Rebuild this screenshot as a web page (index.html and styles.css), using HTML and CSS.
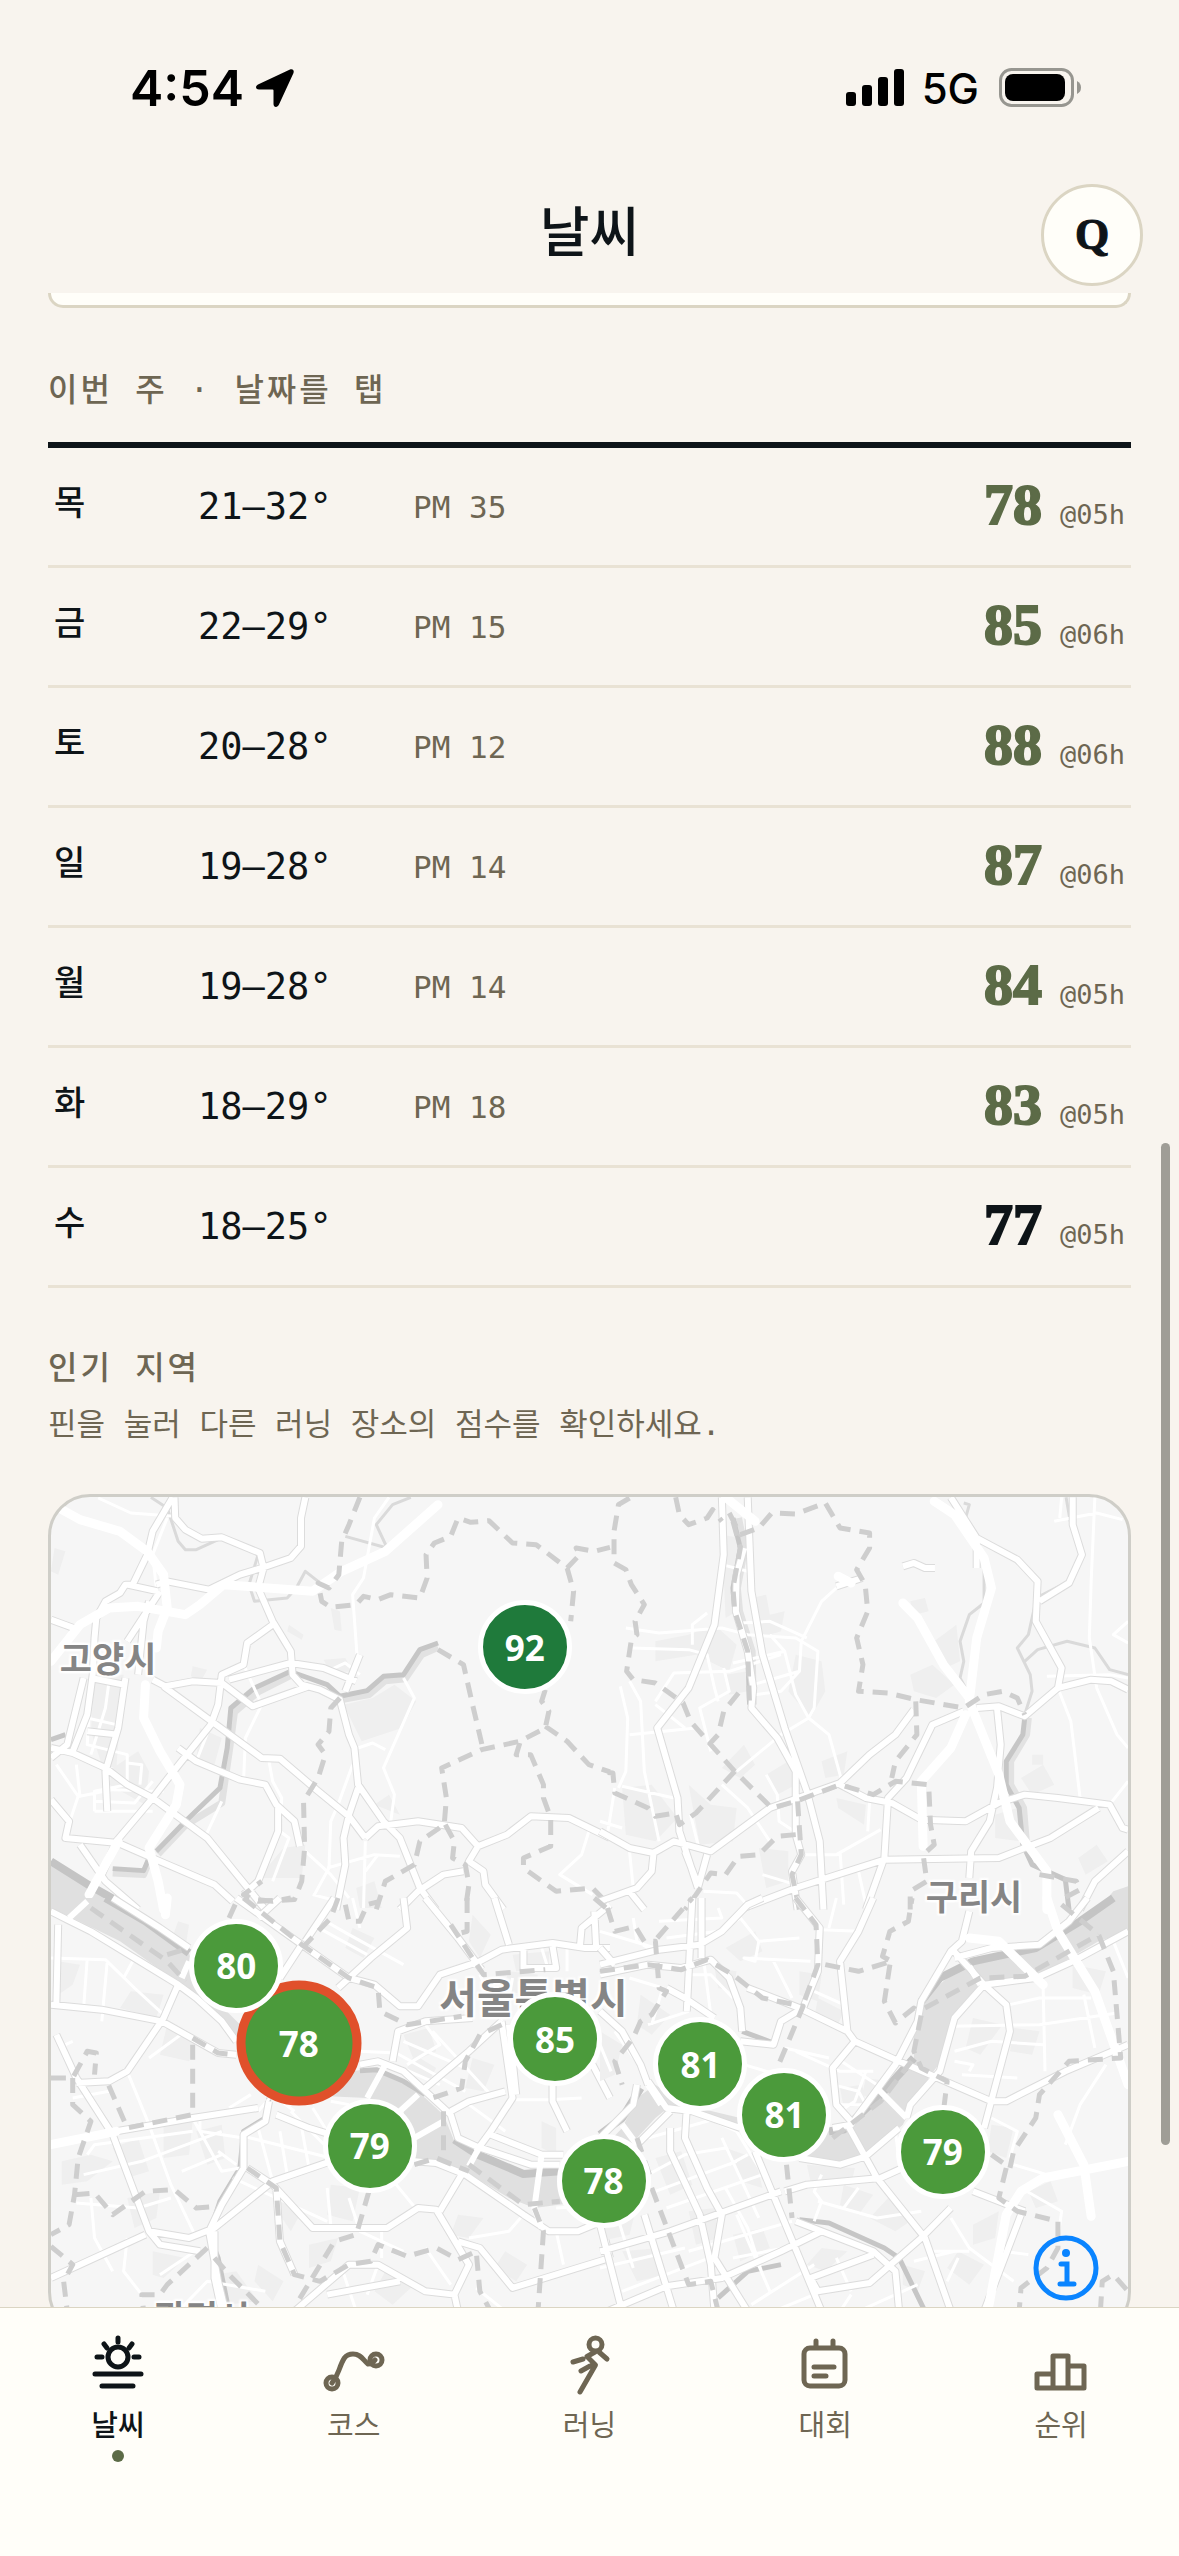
FILE: index.html
```html
<!DOCTYPE html>
<html lang="ko">
<head>
<meta charset="utf-8">
<meta name="viewport" content="width=device-width, initial-scale=1">
<title>날씨</title>
<link rel="stylesheet" href="styles.css">
</head>
<body>
<div class="app">
  <div class="status">
    <div class="status-left">
      <span class="clock">4:54</span>
      <svg class="locate" viewBox="0 0 40 40" aria-hidden="true"><path d="M35 1.500 3 16.500C0 18 .5 21.500 4 21.500H17.500Q18.500 21.500 18.500 22.500V36C18.500 39.500 22.500 40 24 36.500L38.500 5C39.500 2.500 37.500.5 35 1.500Z"/></svg>
    </div>
    <div class="status-right">
      <svg class="bars" viewBox="0 0 58 38" aria-hidden="true"><rect y="23" width="10" height="14" rx="3"/><rect x="16" y="16" width="10" height="21" rx="3"/><rect x="32" y="8" width="10" height="29" rx="3"/><rect x="48" width="10" height="37" rx="3"/></svg>
      <span class="network">5G</span>
      <svg class="battery" viewBox="0 0 83 40" aria-hidden="true"><rect class="shell" x="1.500" y="1.500" width="72" height="36" rx="11"/><rect x="6" y="6" width="60" height="27" rx="8"/><path class="nub" d="M78 13Q82 15 82 19.500T78 26Z"/></svg>
    </div>
  </div>

  <header class="header">
    <h1 class="title">날씨</h1>
    <button class="profile" type="button" aria-label="프로필">Q</button>
  </header>

  <main class="content">
    <div class="card-end"></div>

    <h2 class="eyebrow week-label">이번 주 · 날짜를 탭</h2>
    <table class="week">
      <colgroup><col class="col-day"><col class="col-temp"><col><col></colgroup>
      <tbody>
        <tr><th scope="row">목</th><td class="temp">21–32°</td><td class="pm">PM 35</td><td class="rate"><span class="score good">78</span><span class="hour">@05h</span></td></tr>
        <tr><th scope="row">금</th><td class="temp">22–29°</td><td class="pm">PM 15</td><td class="rate"><span class="score good">85</span><span class="hour">@06h</span></td></tr>
        <tr><th scope="row">토</th><td class="temp">20–28°</td><td class="pm">PM 12</td><td class="rate"><span class="score good">88</span><span class="hour">@06h</span></td></tr>
        <tr><th scope="row">일</th><td class="temp">19–28°</td><td class="pm">PM 14</td><td class="rate"><span class="score good">87</span><span class="hour">@06h</span></td></tr>
        <tr><th scope="row">월</th><td class="temp">19–28°</td><td class="pm">PM 14</td><td class="rate"><span class="score good">84</span><span class="hour">@05h</span></td></tr>
        <tr><th scope="row">화</th><td class="temp">18–29°</td><td class="pm">PM 18</td><td class="rate"><span class="score good">83</span><span class="hour">@05h</span></td></tr>
        <tr><th scope="row">수</th><td class="temp">18–25°</td><td class="pm"></td><td class="rate"><span class="score">77</span><span class="hour">@05h</span></td></tr>
      </tbody>
    </table>

    <h2 class="eyebrow">인기 지역</h2>
    <p class="hint">핀을 눌러 다른 러닝 장소의 점수를 확인하세요.</p>

    <div class="map">
      <svg class="map-art" viewBox="51 1499 1077 834" preserveAspectRatio="xMidYMid slice" aria-hidden="true">
        <defs>
          <path id="nw" d="M365 28 310 130 295 200 255 290 235 290 220 315 180 340 155 390 150 450 145 560 130 680 90 790M370 28 372 90 400 125 445 152 500 148 605 195 615 240 600 300 640 400 690 490 695 560 720 590 770 605 825 635 850 740 865 780 875 890 945 1000 990 1050 1045 1200 1090 1265M730 28 718 90 718 175 690 210 610 240 550 260 465 305 350 280 320 290M240 290 325 310M330 310 240 460M300 340 285 400 270 560M640 410 570 465 560 530 500 560 490 650 470 710 360 860 310 930 210 1060 170 1160M500 585 585 655 740 595M520 575 690 525 780 540 870 580M880 500 840 610M30 395 105 425M120 570 75 770 30 810M30 780 90 795 180 840 240 890 310 930 460 1050 620 1265M340 595 610 810 660 812 760 905 850 985 895 1050M310 575 345 595 420 580 500 585M380 780 430 820 550 875 620 890 650 950 700 1000 715 1075M655 960 655 1030 600 1180 560 1220M235 570 215 720 180 850 185 970M30 935 80 1000 70 1050 215 1065 330 1120 480 1190 530 1240M110 1070 180 1180 270 1265M875 900 850 980 835 1050 840 1130 815 1265M895 1050 930 1015 1040 1000 1160 1020 1205 1075 1180 1120 1220 1150 1225 1190 1275 1265M1205 1075 1285 1040 1350 985 1455 990 1568 1050M990 1265 1040 1210 1110 1160 1165 1150M130 730 215 740M140 570 230 590"/>
          <path id="ne" d="M330 28 335 200 310 410 240 600 155 720 210 930 215 1030 265 1200M400 28 410 310 440 500 500 720 560 910 595 1060 605 1265M390 180 370 260 368 370 400 490 415 600 410 660 480 750 530 850 530 940 530 1040 545 1100 520 1150 535 1265M950 28 1020 150 1130 215 1185 280 1180 400 1250 540 1240 600 1150 685 1080 655 1020 660M1280 28 1280 110 1305 200 1270 285 1190 340M1240 600 1330 575 1385 580 1430 605M850 665 800 740 730 800 650 885 460 960 300 1090 200 1060 145 1095M985 670 900 710 830 870 780 930 770 1110 720 1265M650 890 720 930 790 945 870 995 990 1000 1080 945 1150 920 1240 930 1380 950 1415 1020 1430 1025M1075 660 1085 770 1075 900 1055 1000 1005 1090 1000 1170M390 1260 530 1200 770 1115 1080 1110 1220 1050 1350 960M0 1030 80 1080 145 1095 140 1150 100 1200 0 1240M290 1100 265 1200M230 1090 265 1190M80 1210 120 1265M1430 1090 1340 1180 1300 1265M820 235 850 225 880 240 907 240M640 295 710 270M1020 160 1020 240"/>
          <path id="sw" d="M50 80 45 320M30 40 75 65 140 100 260 180 380 260 430 300 500 370 540 430M200 0 330 90 410 150M380 260 340 360 240 520 190 550 100 555M30 320 170 335 335 370 490 465 540 470M45 410 100 540 200 710 300 1000 330 1040 440 1060M210 700 420 660 600 630M30 1140 130 1090 290 1010M300 1000 410 1020 480 990 640 850 800 790M630 610 620 670 560 710 560 810 500 920 465 1000 490 1150 510 1240M570 810 640 860 750 990 955 990 1040 930 1090 935 1180 1100 1140 1190M1100 940 1160 830M1200 760 1240 700 1300 600 1270 370M650 650 740 690 800 710M1030 790 1090 795 1170 830 1330 950 1400 1000 1480 1000 1568 960M1000 0 1010 90 910 180 850 240 820 270M540 0 720 140 850 240 920 260 990 325 1040 325 1100 230 1210 190 1270 155 1410 135 1500 150 1568 150M1060 0 1150 120 1215 215M1250 0 1290 140M1568 20 1490 90 1485 150M1525 40 1530 150M720 140 660 240M880 500 930 490 1000 520 1060 580 1130 650 1150 720 1200 745 1350 800 1430 800M1060 570 1180 460 1270 370M1130 640 1180 610 1280 580M970 490 985 400 1060 370 1190 360M1290 380 1310 590M1410 560 1410 610 1450 700M1520 500 1568 600M1240 710 1380 770 1440 770M1150 1030 1210 1050 1300 1170 1568 1080M700 1240 850 1100 930 1100 1060 1180 1140 1190 1150 1240M790 1190 990 1150M1330 155 1330 210 1420 210 1410 145M650 870 660 1030 700 1130M480 1000 480 1140 500 1240M1545 980 1568 1080M810 0 730 130M600 60 660 0"/>
          <path id="se" d="M0 200 160 155 270 140 330 100 400 20 440 0M250 0 235 340M275 0 275 180M0 230 130 200 220 210 300 185 350 240 380 330 385 400M530 0 595 90 590 220 550 330 490 370 470 440 380 430M740 0 700 100 650 190 670 400 690 430 810 490 1060 610 1100 610 1260 520 1430 440M400 270 540 330 670 400M690 430 630 510 640 620 680 670M1000 40 980 130 950 160 870 310 860 370 800 500 680 680 630 690M950 150 1000 210 1040 260 1100 320 1110 400 1040 690M1320 0 1270 70 1190 140 1060 150 960 180M1430 100 1280 190 1180 240 1040 260 960 360 920 520 840 620 830 660M670 680 750 840 880 1020 950 1240M130 550 180 630 250 640 380 690M100 740 190 640M235 630 230 720 290 870 330 950 310 1080 400 1240M190 690 190 760 270 950 300 1100 310 1240M420 760 600 1240M540 780 650 800 720 775 810 690M500 880 560 860 760 840 820 810M0 1060 190 1000 490 880M0 980 60 1240M120 950 200 1240M20 1240 180 1165 330 1140 490 1060 600 1000M530 970 600 1000 740 1060 800 1120 810 1240M570 1140 740 1070M570 1140 590 1180 730 1155 870 1020 950 930M1010 880 1150 940M1140 950 1040 1240M0 340 60 400 110 500 130 560M180 270 230 300 310 360M0 150 40 200M100 560 90 620 0 720"/>
        </defs>

        <g class="tile-nw">
          <path class="block" d="M150 560h80l-20 280-40-10-30-100zM200 840l70-50 30 60-10 100-100-60zM835 650l80-20 60-40 60 50-40 80-110 40zM600 1170l70-90 60-10-10 100zM870 1200l50-20 20 80h-60zM440 720l60 30-20 80-50-20zM920 950l40-30 30 60zM40 180l30 10-20 70-20-10zM800 360l25 10 5 60-20-5zM685 410l40 30-5 15-40-25zM420 535l40 10-15 30-30-10zM780 515l60-5 20 40-60 5z"/>
          <path class="water" d="M30 1120 140 1200 250 1265H30Z"/>
          <path class="bank" d="M30 1120 140 1195 250 1262"/>
          <path class="stream" d="M305 28 350 60 380 160 400 185 430 185 490 155M600 200 575 290 590 340 680 330 705 300 730 250 765 280 790 300M840 145 955 180 925 110 970 50 1020 28"/>
          <path class="canal-bed" d="M690 562 600 612 535 672 522 780 500 945 400 1012 325 1098M1095 478 1050 500 1005 572 950 578 905 620 830 635M300 1120 285 1160 200 1155"/>
          <path class="canal" d="M1095 465 1045 485 1000 560 945 565 900 608 825 625 790 590 700 555M690 550 590 600 525 660 515 780 495 900 400 1000 320 1090M300 1110 285 1148 200 1142M30 755 70 740"/>
          <path class="minor" d="M160 30 250 75 370 85M960 28 920 90 890 270 860 320 872 500 870 545M350 90 310 200 320 300M560 530 610 650 565 750 560 880M500 940 455 1045M1000 570 1030 630 945 840 975 920 965 1000M875 780 915 765 950 785M860 830 820 950 800 1000 795 1140 755 1220M895 1060 890 1260M630 820 640 880 665 930 660 1030 685 1050 640 1180M990 1105 920 1100 790 1140M730 1090 800 1160 850 1230M930 1100 895 1150M45 830 105 925 70 1040M100 830 110 925 200 905 340 910M150 970 310 970M150 940 260 945 310 880M140 570 130 770 240 800 240 890 150 910 150 970M190 580 180 660 140 800M240 825 280 830 275 890M130 690 210 710M470 710 430 820M1510 1030 1490 1100 1430 1160 1520 1220M750 1220 820 1240M800 545 840 525 880 560"/>
          <use href="#nw" class="casing"/><use href="#nw" class="major"/>
          <path class="motorway" d="M60 65 110 95 220 130 295 190 340 260 350 360 325 430 320 480M30 520 110 410 190 360 270 355 400 380 440 350 505 290 750 310 830 250 950 190 1095 50M290 590 285 690 330 790 385 890 375 950 300 1080 325 1180 340 1265M215 1060 135 1220"/>
          <path class="border-line" d="M880 28 850 110 830 160 822 260 795 300 765 285 775 340 800 358 870 350 890 325 930 335 965 320 1045 330 1065 270 1062 200 1085 165 1130 145 1150 90 1185 103 1235 98 1300 165 1365 170 1450 240 1485 200 1475 180 1525 190 1568 178M1450 240 1468 310 1460 400M1390 605 1380 640 1400 670 1390 720 1320 760 1215 785 1105 840 1118 930 1112 1010 1045 1060 1030 1130 950 1180 925 1265M1095 485 1165 530 1190 650 1218 780M1390 715 1450 760 1510 830 1568 852M1320 765 1310 800 1350 800 1385 890 1385 930 1405 990 1405 1075 1330 1110 1330 1140 1420 1210 1520 1200 1568 1255M825 630 800 660 795 730 765 770 785 800 765 870 725 940 728 1080 720 1180 700 1235 600 1240 560 1220 610 1180M1115 1010 1140 1060 1135 1110 1170 1130 1180 1190 1170 1265"/>
        </g>

        <g class="tile-ne">
          <path class="block" d="M330 140l50 10-10 220-30 20zM410 330l40-10 10 60 40-10-10 60-60 20zM150 460l90-20 70-30 60 60-20 80-90-50-110 20zM340 560l60-10v60l-50 10zM530 500l70 20 10 90-40 80-60-80zM840 560l60-30 60 60-50 40-60-20zM905 460l60-50 10 110-40 20zM840 340l40-10 10 40-40 10zM60 900l80-10 70 100-60 70-80-20zM240 890l60 60 70 10-10 100-90 10zM330 840l60-70 30 60-40 40zM600 820l70-30-10 70-50 10zM1070 980l60-20 10 100-70-10zM1140 870l60-40 30 60-60 30zM1295 1110l50-40 30 50-60 40zM450 860l60-40 20 70-50 30zM640 930l80 20-5 60-70-50zM430 1080l80 10v90l-60 20zM1170 800h30v30h-30z"/>
          <path class="water" d="M1430 1195 1390 1210 1350 1265H1430Z"/>
          <path class="stream" d="M985 45 1000 50 990 90M1040 210 1040 345 1000 380 975 460 985 520 975 570 1000 620M1262 28 1275 110M1180 340 1160 440 1130 480 1165 560 1170 610 1150 680M1150 520 1185 485 1265 460 1340 480 1380 545 1430 560M1190 325 1260 285"/>
          <path class="canal-bed" d="M375 90 392 180 372 300 378 370 412 490 415 650M1160 690 1155 740 1112 820 1112 890 1147 960 1155 1070"/>
          <path class="canal" d="M1150 690 1145 740 1100 820 1100 890 1135 960 1145 1070 1170 1130 1260 1175 1270 1265M360 90 380 180 360 300 365 370 400 490 405 650"/>
          <path class="minor" d="M70 420 160 435 330 420 400 440 530 450 590 490 580 660 565 690 530 620 500 490 460 440M85 480 240 485 290 500 310 600 320 640M250 470 250 410 290 375M330 230 400 250M380 405 460 400 560 450M360 525 500 490M150 640 200 555 350 550 490 500M420 620 490 610 540 550 545 460 600 340 640 300M335 540 350 610 270 660 300 790M415 590 540 550M150 650 230 720M80 740 260 720M80 580 110 640 120 850 160 1060M55 595 75 690 70 850 50 900M60 895 200 930M330 890 400 960 460 1060M370 850 490 740 565 690 620 740 655 880M40 900 20 1040M245 980 270 1090M1340 28 1330 280 1325 450 1345 600 1400 740 1430 780M1240 600 1275 700 1300 930M1250 28 1245 90M1230 100 1345 75 1415 95M1430 400 1390 440 1430 465M1430 880 1380 950M1210 565 1380 560 1430 570M555 1100 640 1100 760 1025M650 1090 660 1250M700 1150 720 1250M730 940 725 1030M450 860 480 920 485 1000 540 1040M0 1000 60 1020M80 1090 90 1200M280 1210 370 1215 410 1265M440 1160 530 1190"/>
          <use href="#ne" class="casing"/><use href="#ne" class="major"/>
          <path class="motorway" d="M340 28 420 100M905 40 960 80 1040 210 1060 300 1020 450 1000 640 1080 860 1110 1000 1210 1150 1210 1265M820 345 860 390 930 530 1000 630M990 680 950 780 870 880 875 1075M645 265 680 285"/>
          <path class="border-line" d="M80 30 50 50 38 130 38 225 70 245 85 290 120 350 95 400 100 440 85 455 72 550 90 575 150 585 225 645 245 700 300 770 365 850 465 960 530 940 650 890 740 920 800 880 890 890 895 1010 905 1070 875 1100 885 1180 840 1210 840 1265M205 28 215 80 240 110 290 90 305 65 330 100M350 75 380 140 430 120 465 75 530 78 610 45 650 120 730 135 730 180 695 245 718 290 725 370 695 450 712 530 700 610 780 615 855 635 985 660 1040 620 1090 610 1130 630 1150 680M855 640 858 740 800 820 790 870M375 615 335 670 320 740 295 770M365 850 260 975 215 1010 205 975 150 985 130 960 40 915 35 855 0 852M530 1040 480 1045 430 1100 375 1105 340 1160 300 1155 260 1220 230 1265M535 940 545 1100 520 1160 540 1265M1190 1160 1290 1180 1300 1205 1240 1240M360 100 380 180 360 300 365 370 400 490 405 650"/>
        </g>

        <g class="tile-sw">
          <path class="block" d="M50 190l60 10-20 60-40 30zM250 280l90 10-20 70-100-30zM350 380l80 50-20 60-80-20zM60 790l80-20 60 20-70 60-70 10zM200 750l70-30 30 100-60 20zM340 660l80 10-10 100-70 10zM430 700l70-20 10 100-50 20zM240 900l90-20-10 80-60 30zM310 1060l90 20-60 60-30-10zM380 70l30 10-10 70-40-20zM860 90l60 30-30 60-50-30zM1000 410l70-20 20 70-60 30zM1030 470l60 40-20 40-60-40zM1190 50l50 60-30 70-30-50zM1300 170l100-10v50l-90 10zM1150 950l70 10-40 60-50-10zM1380 670l40 20v80l-40-20zM740 1040l80-20-20 70-60 20zM660 880l60 60-30 60-30-50zM600 1100l70 50-30 60-50-60zM950 1120l80 40-60 60-50-40zM1190 480l60 20-30 80-50-10zM1290 220l80 10-20 60-80-10zM1280 1060l60 40-30 50-60-40zM800 860l80 10-20 100-70-20zM480 1130l60-10 60 90-90 10z"/>
          <path class="water" d="M30 0H180L410 165 430 250 560 390 700 440 860 520 920 510 1000 550 1060 600 1110 650 1140 730 1200 760 1300 810 1380 830 1568 790V900L1360 930 1290 900 1200 840 1110 790 1030 790 1000 640 900 600 700 590 540 420 430 290 350 230 220 130 90 60 30 30Z"/>
          <path class="bank" d="M180 0 290 70 410 165M1140 725 1200 768 1330 828 1430 820"/>
          <path class="canal" d="M630 600 620 660 560 700 550 810 495 910 465 1010 490 1080 520 1240M880 518 925 515 1000 550 1060 590"/>
          <path class="minor" d="M30 180 180 185 260 270 340 350M130 180 120 330M185 190 170 370M260 180 230 240M70 440 90 430M90 600 190 580M240 520 300 680 360 860 430 1020M130 770 150 740 420 700M120 830 280 790 500 700M420 660 500 820 550 810M100 915 270 930 360 900M140 900 150 1020 200 1120M440 660 440 700 560 720M490 760 540 800M390 820 500 770M600 690 640 850M660 700 680 830M720 690 740 810M560 715 800 780M600 640 640 590 700 640M520 630 580 590M690 640 800 760M750 630 790 700M800 610 850 620M530 840 650 900 790 970M790 870 800 980M450 1000 550 920 640 850M240 1020 230 1120 280 1190M330 1130 440 1050M750 80 900 170M770 60 850 110 1000 200M740 160 820 220M860 0 880 90M400 400 300 480M1000 430 1170 510M880 460 980 465 1170 580M1010 500 1100 440 1060 380M1080 400 1240 590M930 480 1100 560M1180 620 1280 700M1300 605 1400 605 1490 600M1450 150 1450 220M1380 150 1400 220M1240 240 1260 300M1300 240 1290 300M1210 230 1270 370M850 900 880 1000 1000 1060M940 1000 940 1080M1040 940 980 860 920 850M830 1110 870 1240M930 1100 900 1190M1060 1050 1130 1160M1180 1020 1290 1000 1330 950M1200 1170 1280 1240M1420 1000 1440 1100M1420 930 1568 920M380 1240 460 1150 620 1180"/>
          <use href="#sw" class="casing"/><use href="#sw" class="major"/>
          <path class="bridge" d="M130 10 80 60M410 190 390 240M900 600 950 500M990 640 1040 590M1030 720 1110 670M1180 805 1205 755M1380 770 1360 930 1380 990"/>
          <path class="motorway" d="M30 740 210 700M350 0 345 50"/>
          <path class="border-line" d="M420 420 490 465 530 470M420 440 420 650 240 690 180 540M30 540 90 540 130 460 155 465 150 530M90 540 90 620 140 670 105 780 95 890 80 980 30 1010M95 890 150 885 200 950 290 880 370 875 430 930 490 925M30 1045 90 1100 65 1150 75 1240M520 60 545 0M560 0 720 140 850 240 930 270 935 340 1010 380 1160 355M820 0 800 60 730 140M840 20 850 70 880 70 900 20 935 10M600 5 640 10 690 0M1175 0 1175 100 1140 110M1130 80 1220 230 1390 215M1270 380 1210 410 1170 490 1160 570 1080 600M1110 640 1110 770M570 810 650 870 660 1030 700 1130 770 1150 850 1100 910 1090 930 1040 1010 1075 1090 1050 1150 1085 1200 1060 1210 1180 1240 1240M905 880 870 1010 810 1030 710 1210M1360 930 1385 1000 1370 1240M460 1050 350 1160 330 1190 280 1190 285 1240M480 1080 520 1130 620 1240M140 30 350 190 400 250M350 170 410 150M1180 800 1330 920 1430 910M1030 800 1090 780 1180 820M1525 0 1568 40M1545 460 1568 500"/>
        </g>

        <g class="tile-se">
          <path class="block" d="M340 150l80-50 20 60-60 30zM310 210l60 10-10 60-40-10zM110 290l80 60-50 60-40-30zM540 220l60 10-10 80-50-20zM590 300l70 40-20 50-60-30zM1100 170l60 30 10 50-60-20zM1280 200l90 20-20 70-70-20zM1120 390l70 10-20 70-60-10zM1010 360l80 20-60 90-40-20zM1060 680l60 10-20 90-50-20zM660 860l80 30-40 60-50-30zM780 900l60 70-40 30-70-40zM600 1050l70 10-60 60-50-20zM340 750l80 30 20 90-60-20zM150 780l70-20 30 100-60 30zM20 900l80 20-20 90-80 20zM240 940l70-10 10 90-60 20zM60 1060l100-10 20 80-80 20zM360 1010l80-20 20 60-80 40zM1010 980l70-40-10 80-60 20zM970 1060l70 40-40 60-60-50zM1160 880l60-30 20 60-60 20zM650 570l60-10 10 60-60 10zM720 540l60 10-30 60-40-20zM0 400l60 40-20 90-40 20zM560 800l130 10-10 50-110-10zM820 1100l60 20-20 60-40-20z"/>
          <path class="water" d="M0 760 60 690 100 600 150 560 230 620 380 660 500 720 620 700 700 660 800 540 850 480 850 400 880 300 960 220 1010 190 1150 150 1300 80 1390 0H1430V100L1350 130 1180 240 1040 260 980 330 930 480 870 570 820 680 730 770 650 795 560 780 390 700 250 645 190 625 150 660 100 720 0 850Z"/>
          <path class="bank" d="M620 700 660 695 760 590 850 480M870 310 920 240 1010 190 1180 150 1300 70 1390 0M0 710 60 660 110 570"/>
          <path class="canal" d="M540 965 620 975 770 1050 810 1080 880 1240M385 400 470 435M320 1200 400 1120 490 1100"/>
          <path class="minor" d="M0 100 60 120 150 150M90 60 100 130 130 150M160 70 330 60 320 30M180 120 320 100 380 60M380 60 430 130 420 190 390 180 570 190M430 130 540 120M600 95 700 100M640 0 620 90M470 190 520 300M580 280 660 320M240 230 300 230 360 300M80 240 170 270 140 380M130 380 240 340M280 180 300 350M530 460 650 520 740 520M500 450 620 480M390 500 510 540M630 560 700 580 720 620 650 620M640 480 750 560M720 520 690 610 650 640M950 385 1190 380 1400 345M960 460 1060 430 1200 440M960 490 1010 500 1000 520M980 530 1130 540M1200 270 1205 520M1110 320 1190 300 1330 300M1310 290 1340 450M1390 130 1430 240M1370 500 1300 620 1260 740M1060 660 1130 700 1110 780M1120 800 1210 830M1140 870 1250 940 1240 1020M800 700 810 790M600 830 580 880 600 910 580 970M590 910 750 960 870 940M700 870 660 930M950 960 1000 1050 1120 1150M900 1060 1000 1060M850 1090 960 1060M970 1080 940 1150M130 830 230 770 340 750M150 880 370 790M130 720 320 660M290 660 370 700 480 900M330 720 430 960M180 930 440 830M340 870 400 990 440 1130M240 1060 520 970M40 930 90 1110M60 1180 320 1070M0 1110 230 1050M370 950 460 1180M410 1220 580 1100M470 1240 580 1190M640 1080 680 1180M360 1080 500 1050M700 1240 860 1160M650 1240 680 1190M1090 1060 1160 1070M40 400 130 540M0 440 30 520M400 770 350 800"/>
          <use href="#se" class="casing"/><use href="#se" class="major"/>
          <path class="bridge" d="M750 570 830 660M1000 205 1030 260M60 680 100 740M130 560 165 620"/>
          <path class="motorway" d="M1210 0 1240 100 1340 280 1430 560M1000 120 1080 130 1200 260M1240 650 1310 800 1330 955M1430 790 1200 840 1140 880 1100 950 1050 1240"/>
          <path class="border-line" d="M0 220 130 200 220 215 290 185 360 230 440 300 550 325 480 510M20 30 40 100 95 85 120 130 150 130 160 270 180 280 140 350 110 370 90 420 40 490 60 560M155 120 250 0M530 0 585 80 590 200 550 320M610 200 700 220 790 190 765 175 785 100 835 70 845 0M785 200 770 310 800 375 850 330 870 350 850 460 870 510 940 550 930 640M1250 20 1350 110 1390 220 1410 480 1270 490 1190 590 1180 660 1120 760 1110 810 1060 770M1100 810 1080 900 1130 940 1240 970 1240 1050 1210 1110 1140 1170 1135 1240M505 800 520 960M140 870 240 1160 300 1150 320 1240M1355 1240 1360 1150 1390 1130 1430 1180M630 720 760 610 850 480M880 330 1030 240 1150 235 1350 110M100 720 140 850"/>
        </g>
      </svg>

      <span class="place" style="left:5.3%;top:19.2%">고양시</span>
      <span class="place" style="left:85.7%;top:47.7%">구리시</span>
      <span class="place city" style="left:44.8%;top:59.7%">서울특별시</span>
      <span class="place" style="left:14%;top:98.2%">광명시</span>

      <button class="pin best" type="button" style="left:44%;top:18%">92</button>
      <button class="pin selected" type="button" style="left:23%;top:65.5%">78</button>
      <button class="pin" type="button" style="left:17.2%;top:56.2%">80</button>
      <button class="pin" type="button" style="left:29.6%;top:77.8%">79</button>
      <button class="pin" type="button" style="left:46.8%;top:65%">85</button>
      <button class="pin" type="button" style="left:51.3%;top:82%">78</button>
      <button class="pin" type="button" style="left:60.3%;top:68%">81</button>
      <button class="pin" type="button" style="left:68.1%;top:74.1%">81</button>
      <button class="pin" type="button" style="left:82.8%;top:78.5%">79</button>

      <button class="info" type="button" aria-label="지도 정보">
        <svg viewBox="0 0 66 66" aria-hidden="true"><circle class="ring" cx="33" cy="33" r="30"/><circle cx="33" cy="18" r="4"/><path class="stem" d="M28 29H34V48M27 49H41"/></svg>
      </button>
    </div>
  </main>

  <nav class="tabs">
    <a class="tab active" href="#weather" aria-current="page">
      <svg viewBox="0 0 72 72" aria-hidden="true"><circle cx="36" cy="29" r="10"/><path d="M36 10v4M22 16l3 4M50 16l-3 4M15 29h5M52 29h5M13 46h46M20 58h31"/></svg>
      <span>날씨</span><i class="dot"></i>
    </a>
    <a class="tab" href="#course">
      <svg viewBox="0 0 72 72" aria-hidden="true"><circle cx="14" cy="55" r="6"/><circle cx="58" cy="32" r="6"/><path d="M14 55Q19 48 21 42C25 31 27 26 35 26C43 26 45 32 50 36Q54 36 57 32"/></svg>
      <span>코스</span>
    </a>
    <a class="tab" href="#running">
      <svg viewBox="0 0 72 72" aria-hidden="true"><circle cx="42.500" cy="16.500" r="6.500"/><path d="M42 24 34 28.500 42.500 37 27 64M46 24l8 7M20 34l10-3M28 43l9-5"/></svg>
      <span>러닝</span>
    </a>
    <a class="tab" href="#race">
      <svg viewBox="0 0 72 72" aria-hidden="true"><rect x="15" y="20" width="41" height="38" rx="6"/><path d="M27 13v6M44 13v6M25 39h20M25 48h12"/></svg>
      <span>대회</span>
    </a>
    <a class="tab" href="#ranking">
      <svg viewBox="0 0 72 72" aria-hidden="true"><path d="M12 46H28V60H12ZM28 28H43V60H28ZM43 38H59V60H43Z"/></svg>
      <span>순위</span>
    </a>
  </nav>
  <div class="scroll-thumb"></div>
</div>
</body>
</html>
```

FILE: styles.css
```css
:root {
  --paper: #f8f4ee;
  --surface: #fffef9;
  --ink: #0e1418;
  --muted: #6e6653;
  --line: #e9e2d4;
  --edge: #dbd5c3;
  --moss: #5c6b47;
  --sans: "Noto Sans CJK KR", "Noto Sans", sans-serif;
  --mono: "DejaVu Sans Mono", "Noto Sans CJK KR", monospace;
  --serif: "Liberation Serif", serif;
}

* { box-sizing: border-box; }

body {
  margin: 0;
  background: var(--paper);
  color: var(--ink);
  font-family: var(--sans);
}

button { padding: 0; font: inherit; }

.app {
  position: relative;
  display: flex;
  flex-direction: column;
  height: 100vh;
  overflow: hidden;
}

/* Status bar */
.status {
  display: flex;
  justify-content: space-between;
  align-items: center;
  height: 176px;
  padding: 0 97px 0 130px;
  font-family: Inter, sans-serif;
  color: #000;
}
.status-left, .status-right { display: flex; align-items: center; }
.status-left { gap: 11px; }
.clock { font-size: 50px; font-weight: 600; }
.network { margin: 0 20px 0 18px; font-size: 42px; font-weight: 500; }
.locate { width: 40px; height: 40px; }
.bars { width: 58px; height: 38px; }
.battery { width: 83px; height: 40px; }
.battery .shell { fill: none; stroke: #979690; stroke-width: 3; }
.battery .nub { fill: #979690; }

/* Header */
.header {
  display: grid;
  grid-template-columns: 1fr auto 1fr;
  align-items: center;
  height: 117px;
  padding: 0 36px;
}
.title {
  grid-column: 2;
  margin: 0;
  padding-bottom: 12px;
  font-size: 54px;
  font-weight: 500;
  line-height: 72px;
}
.profile {
  justify-self: end;
  width: 102px;
  height: 102px;
  border: 3px solid var(--edge);
  border-radius: 50%;
  background: var(--surface);
  color: var(--ink);
  font: 700 44px var(--serif);
  -webkit-text-stroke: 1px currentColor;
}

/* Scrolling content */
.content {
  flex: 1;
  min-height: 0;
  overflow: hidden;
  padding: 0 48px;
}
.card-end {
  height: 15px;
  border: 3px solid var(--edge);
  border-top: 0;
  border-radius: 0 0 20px 20px;
  background: var(--surface);
}
.eyebrow {
  margin: 0;
  color: var(--muted);
  font: 500 32px/48px var(--mono);
  letter-spacing: 3px;
}
.week-label { padding: 58px 0 28px; }

.week {
  width: 100%;
  table-layout: fixed;
  border-collapse: separate;
  border-spacing: 0;
  border-top: 6px solid var(--ink);
  margin-bottom: 56px;
}
.col-day { width: 150px; }
.col-temp { width: 215px; }
.week th, .week td {
  height: 120px;
  padding: 0 6px 0 0;
  border-bottom: 3px solid var(--line);
  text-align: left;
  vertical-align: middle;
  white-space: nowrap;
}
.week th { padding: 0 6px 12px; font-size: 34px; font-weight: 500; }
.week .temp { font: 37px var(--mono); }
.week .pm { font: 31px var(--mono); color: var(--muted); }
.week .rate { padding-bottom: 4px; text-align: right; }
.score {
  font: 700 58px var(--serif);
  -webkit-text-stroke: 2px currentColor;
}
.score.good { color: var(--moss); }
.hour { margin-left: 18px; font: 27px var(--mono); color: var(--muted); }

.hint {
  margin: 8px 0 46px;
  color: var(--muted);
  font: 31px/48px var(--mono);
}

/* Map */
.map {
  position: relative;
  height: 840px;
  border: 3px solid #cfcec8;
  border-radius: 42px;
  background: #f6f6f6;
  overflow: hidden;
}
.map-art { display: block; width: 100%; height: 100%; }
.map-art path, .map-art use { fill: none; vector-effect: non-scaling-stroke; stroke-linejoin: round; }
.tile-nw { transform: translate(40px, 1490px) scale(.3635, .3333); }
.tile-ne { transform: translate(600px, 1490px) scale(.3693, .3333); }
.tile-sw { transform: translate(40px, 1900px) scale(.3635, .3333); }
.tile-se { transform: translate(600px, 1900px) scale(.3693, .3333); }
.map-art .block { fill: #efefef; }
.map-art .water { fill: #e0e0e0; }
.bank { stroke: #c4c4c4; stroke-width: 8px; }
.stream { stroke: #dadada; stroke-width: 3px; }
.canal-bed { stroke: #e2e2e2; stroke-width: 7px; }
.canal { stroke: #c6c6c6; stroke-width: 5px; }
.minor { stroke: #fff; stroke-width: 3px; }
.casing { stroke: #dcdcdc; stroke-width: 8px; }
.major { stroke: #fff; stroke-width: 6px; }
.bridge { stroke: #fff; stroke-width: 6px; }
.motorway { stroke: #fff; stroke-width: 9px; stroke-linecap: round; }
.border-line { stroke: #cecece; stroke-width: 5px; stroke-dasharray: 15 9; }

.place {
  position: absolute;
  transform: translate(-50%, -50%);
  color: #858585;
  font-size: 35px;
  font-weight: 700;
  line-height: 40px;
  white-space: nowrap;
  text-shadow: 0 0 3px #fff, 2px 2px 2px #fff, -2px -2px 2px #fff, 2px -2px 2px #fff, -2px 2px 2px #fff;
}
.place.city { font-size: 41px; }

.pin {
  position: absolute;
  width: 94px;
  height: 94px;
  transform: translate(-50%, -50%);
  border: 5px solid #fff;
  border-radius: 50%;
  background: #4b9a3b;
  color: #fff;
  font: 700 35px "Noto Sans", sans-serif;
}
.pin.best { background: #1f7a3b; }
.pin.selected {
  width: 125px;
  height: 125px;
  border: 9px solid #e0502b;
}
.info {
  position: absolute;
  right: 29px;
  bottom: 30px;
  width: 66px;
  height: 66px;
  border: 0;
  background: none;
}
.info svg { display: block; fill: #0a84ff; }
.info .ring, .info .stem { fill: none; stroke: #0a84ff; stroke-width: 5; stroke-linecap: round; }

/* Tab bar */
.tabs {
  display: grid;
  grid-template-columns: repeat(5, 1fr);
  flex: none;
  height: 249px;
  padding-top: 20px;
  border-top: 1px solid var(--edge);
  background: var(--surface);
}
.tab {
  display: flex;
  flex-direction: column;
  align-items: center;
  color: var(--muted);
  font-size: 29px;
  line-height: 46px;
  text-decoration: none;
}
.tab svg {
  width: 72px;
  height: 72px;
  fill: none;
  stroke: currentColor;
  stroke-width: 5;
  stroke-linecap: round;
  stroke-linejoin: round;
}
.tab.active { color: var(--ink); font-weight: 500; }
.dot {
  width: 12px;
  height: 12px;
  margin-top: 4px;
  border-radius: 50%;
  background: var(--moss);
}

.scroll-thumb {
  position: absolute;
  top: 1143px;
  right: 9px;
  width: 9px;
  height: 1002px;
  border-radius: 5px;
  background: #9f9d96;
}
```
